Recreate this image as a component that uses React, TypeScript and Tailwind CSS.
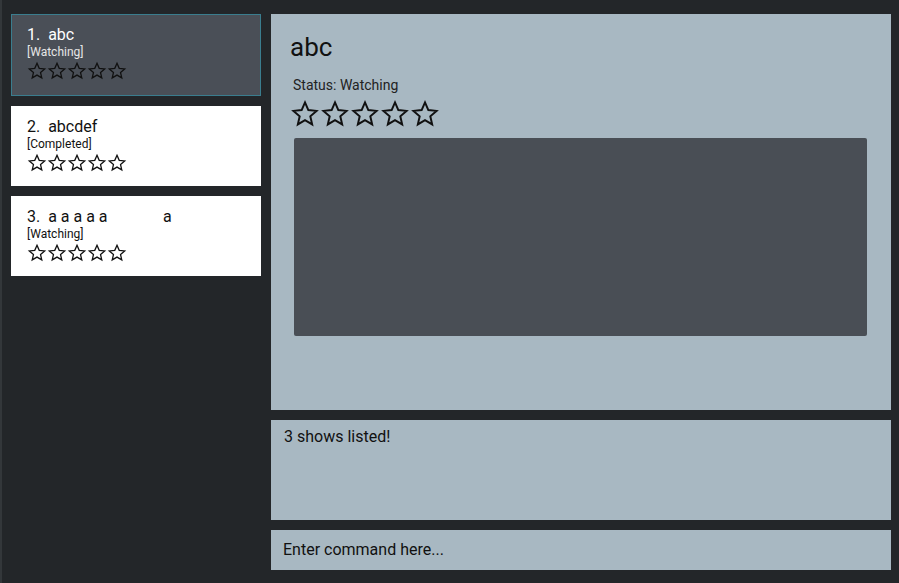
import React from 'react'

type Show = { name: string; status: string }

const shows: Show[] = [
  { name: 'abc', status: 'Watching' },
  { name: 'abcdef', status: 'Completed' },
  { name: 'a a a a a              a', status: 'Watching' },
]

function Star({ size }: { size: number }) {
  return (
    <svg width={size} height={size} viewBox="-1 -1 26 26" fill="none">
      <polygon
        points="12,2 14.9,8.6 22,9.3 16.6,14 18.2,21 12,17.3 5.8,21 7.4,14 2,9.3 9.1,8.6"
        stroke="#111"
        strokeWidth="1.7"
        strokeLinejoin="miter"
      />
    </svg>
  )
}

function Stars({ size }: { size: number }) {
  return (
    <div className="flex">
      {[0, 1, 2, 3, 4].map((i) => (
        <Star key={i} size={size} />
      ))}
    </div>
  )
}

function ShowCard({ show, index, selected }: { show: Show; index: number; selected: boolean }) {
  return (
    <div
      className={
        selected
          ? 'h-[82px] border border-[#3a7d8e] bg-[#4a4f57] pl-[15px] pt-[10px] text-white'
          : 'h-[80px] bg-white pl-[16px] pt-[11px] text-[#111]'
      }
    >
      <div className="text-[16px] leading-[20px] whitespace-pre">
        {index + 1}.  {show.name}
      </div>
      <div className={selected ? 'text-[12px] leading-[15px] text-[#e6e6e6]' : 'text-[12px] leading-[15px]'}>
        [{show.status}]
      </div>
      <div className="mt-[1px]">
        <Stars size={20} />
      </div>
    </div>
  )
}

export default function App() {
  return (
    <div
      className="flex h-[583px] w-[899px] border-l-2 border-[#33373a] bg-[#232629] pt-[14px]"
      style={{ fontFamily: 'Roboto, "Open Sans", sans-serif' }}
    >
      <div className="ml-[9px] flex w-[250px] flex-col gap-[10px]">
        {shows.map((s, i) => (
          <ShowCard key={i} show={s} index={i} selected={i === 0} />
        ))}
      </div>

      <div className="ml-[10px] flex w-[620px] flex-col gap-[10px]">
        <div className="h-[396px] bg-[#a8b8c2] pl-[19px] pt-[16px]">
          <div className="text-[26px] leading-[34px] text-[#111]">abc</div>
          <div className="mt-[12px] pl-[3px] text-[14px] leading-[18px] text-[#222]">Status: Watching</div>
          <div className="mt-[5px]">
            <Stars size={30} />
          </div>
          <div className="ml-[4px] mt-[9px] h-[198px] w-[573px] rounded-[2px] bg-[#494e55]" />
        </div>

        <div className="h-[100px] bg-[#a8b8c2] pl-[13px] pt-[7px] text-[16px] leading-[20px] text-[#111]">
          3 shows listed!
        </div>

        <div className="flex h-[40px] items-center bg-[#a8b8c2] pl-[12px] text-[16px] text-[#111]">
          Enter command here...
        </div>
      </div>
    </div>
  )
}
